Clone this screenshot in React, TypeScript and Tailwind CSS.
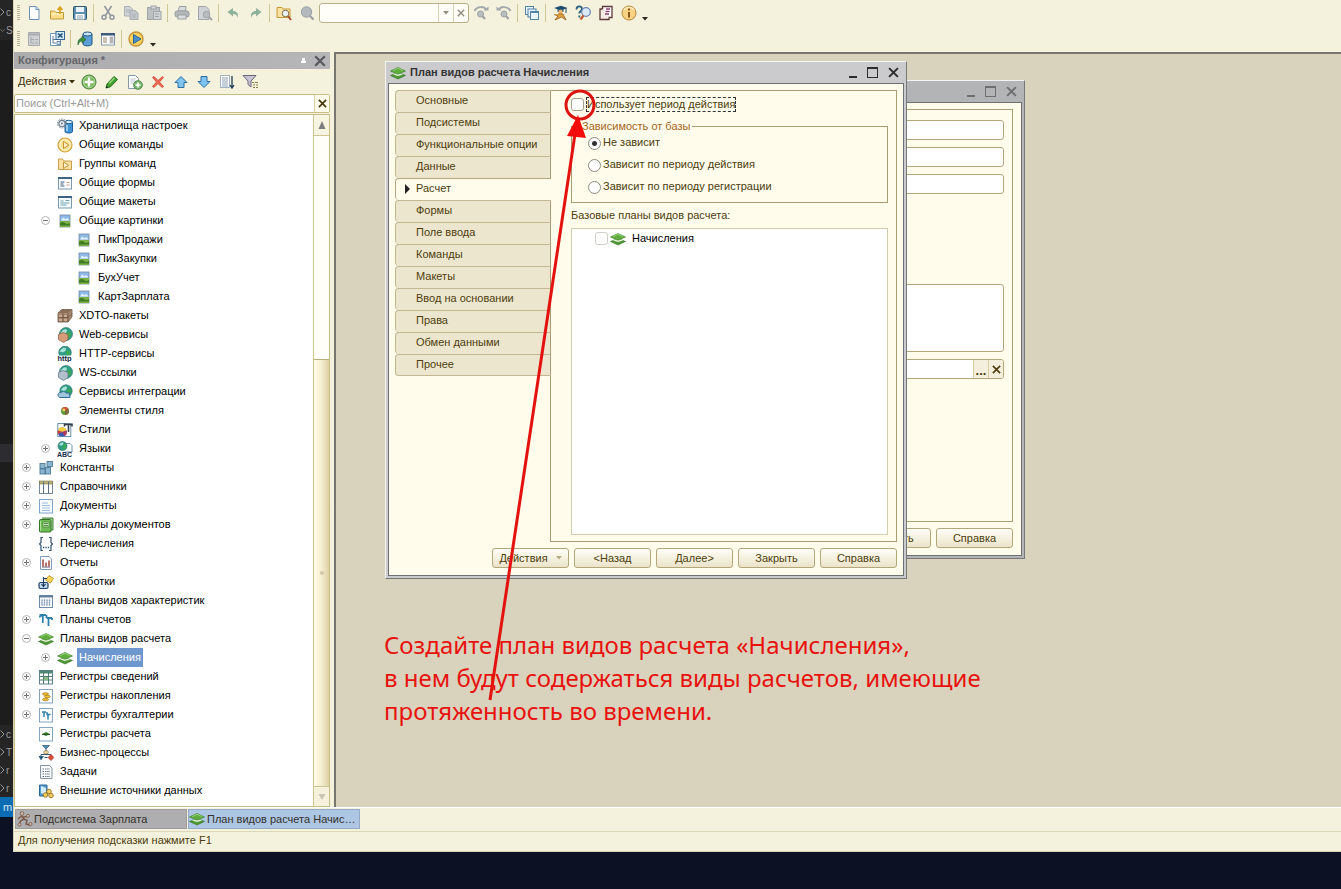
import React from "react";

type IconName = string;

function Layers() {
  return (
    <g>
      <path d="M0.5 10.5 L8 7.5 L15.5 10.5 L8 14 Z" fill="#4f9a35" stroke="#2f6f22" strokeWidth=".6" />
      <path d="M3 9.5 L8 7.6 L13 9.5 L8 11 Z" fill="#e4efd8" />
      <path d="M0.5 6 L8 2.5 L15.5 6 L8 9.2 Z" fill="#5fae3d" stroke="#357d26" strokeWidth=".6" />
      <path d="M3 5.6 L8 3.3 L13 5.6" fill="none" stroke="#93cf74" strokeWidth="1" />
    </g>
  );
}

function Globe({ x = 9, y = 7, r = 6 }: { x?: number; y?: number; r?: number }) {
  return (
    <g>
      <circle cx={x} cy={y} r={r} fill="#2f9d86" stroke="#23675f" strokeWidth=".6" />
      <path d={`M${x - r + 1} ${y - 1} q${r / 2} ${-r / 1.2} ${r} ${-r / 2} q0 ${r / 2} ${-r / 2} ${r / 1.5} z`} fill="#a8e0d8" />
      <path d={`M${x + 1} ${y - 2} q3 0 ${r - 2} 2 q-1 3 -3 4 z`} fill="#3dab4b" />
    </g>
  );
}

function Picture() {
  return (
    <g>
      <rect x="3" y="2" width="10" height="12" fill="#8db9e6" stroke="#7288a3" strokeWidth=".8" />
      <path d="M4 7.5 L6 4.5 L8.500 6 L10.5 5 L12.5 7.5 Z" fill="#e3f0fa" />
      <rect x="3" y="8" width="10" height="6" fill="#7bb043" />
      <path d="M3 10 q3 -2 5 0 t5 0 v2.500 h-10 z" fill="#3f7a24" />
    </g>
  );
}

function Account() {
  return (
    <path d="M1.5 3 H8 M4.8 3 V11 M8.5 6 H14 M10.5 6 V14 M4.8 3 q-3 0 -3 2.500 M8.5 3 v3 M14 6 v2" fill="none" stroke="#2f81ad" strokeWidth="1.8" />
  );
}

const sheet = <path d="M3.5 1.5 H10 L13 4.5 V14.5 H3.5 Z" fill="#fdfeff" stroke="#6e8fb5" />;

const icons: Record<IconName, React.ReactNode> = {
  new: (
    <g>
      {sheet}
      <path d="M10 1.5 V4.5 H13" fill="#cfe0f2" stroke="#6e8fb5" />
    </g>
  ),
  open: (
    <g>
      <path d="M1.500 14 V6 H5.500 L7 7.500 H14.500 V14 Z" fill="#fbdc8a" stroke="#c39a3a" />
      <path d="M2.500 9 H13.500" stroke="#fff0bf" strokeWidth="1.500" />
      <path d="M11 9 V3 M8.600 5 L11 2 L13.400 5" fill="none" stroke="#d9a31c" strokeWidth="1.700" />
    </g>
  ),
  save: (
    <g>
      <rect x="1.5" y="1.5" width="13" height="13" rx="1" fill="#5b8fae" stroke="#2f566f" />
      <rect x="4" y="2" width="8" height="5" fill="#e9f3f8" />
      <rect x="3.5" y="9" width="9" height="5.5" fill="#fff" />
      <path d="M5 11 h6 M5 13 h6" stroke="#6a8b9c" strokeWidth=".8" />
    </g>
  ),
  cut: (
    <g fill="none" stroke="#8f979d" strokeWidth="1.5">
      <path d="M4.5 1 L10.5 10.5 M11.5 1 L5.5 10.5" />
      <circle cx="4" cy="12.3" r="2" />
      <circle cx="12" cy="12.3" r="2" />
    </g>
  ),
  copy: (
    <g fill="#d2d6d8" stroke="#a9afb3">
      <path d="M1.500 1.500 H7 L9.500 4 V11 H1.500 Z" />
      <path d="M7 5.500 H12 L15 8 V14.500 H7 Z" fill="#c0c6ca" />
      <path d="M3 5 h4 M3 7 h4 M9 10 h4 M9 12 h4" />
    </g>
  ),
  paste: (
    <g stroke="#a0a5a8">
      <rect x="1.500" y="2.500" width="12" height="12" fill="#bdbfc0" />
      <rect x="5" y="1" width="5" height="3" fill="#d8dadb" />
      <rect x="7.500" y="6.500" width="7.500" height="8" fill="#d0d3d5" />
      <path d="M9 9 h4 M9 11.500 h4" />
    </g>
  ),
  print: (
    <g stroke="#9a9fa2">
      <path d="M4 6 L5.500 1.500 H12 L11.500 6 Z" fill="#d9dcdd" />
      <rect x="1" y="6" width="14" height="6" rx="2" fill="#b3b7b9" />
      <rect x="4" y="10" width="8" height="4" fill="#dcdfe0" />
    </g>
  ),
  preview: (
    <g stroke="#a0a5a9">
      <path d="M1.500 1.500 H9 L12 4.500 V14.500 H1.500 Z" fill="#cfd2d4" />
      <circle cx="9.500" cy="9.500" r="3.300" fill="#b5bbbf" />
      <path d="M12 12 L15 15" strokeWidth="2" />
    </g>
  ),
  undo: <path d="M2.500 7 L8 3 V6 C12 6 13.500 9 13 13 C12 10 11 9 8 9 V11.500 Z" fill="#8fb09a" />,
  redo: <path d="M13.500 7 L8 3 V6 C4 6 2.500 9 3 13 C4 10 5 9 8 9 V11.500 Z" fill="#8fb09a" />,
  findfolder: (
    <g>
      <path d="M1 12.500 V2.500 H6 L7 4 H14 V12.500 Z" fill="#fbe3a1" stroke="#c99a34" />
      <circle cx="9.500" cy="8.500" r="3.300" fill="#e9f2f8" stroke="#7c6a4d" />
      <path d="M12 11 L15 15" stroke="#a8512f" strokeWidth="2" />
    </g>
  ),
  zoom: (
    <g>
      <circle cx="7.500" cy="7" r="5.200" fill="#b3b9be" stroke="#989fa5" />
      <path d="M11 11 L14.500 14.500" stroke="#989fa5" strokeWidth="2.200" />
    </g>
  ),
  findprev: (
    <g>
      <path d="M1.500 6 C4 1 11 1 13.500 5" fill="none" stroke="#a3a8ab" strokeWidth="2" />
      <path d="M10.500 5.500 H15.500 V1.500 Z" fill="#a3a8ab" />
      <circle cx="7.500" cy="9" r="3" fill="#b9bec1" stroke="#9ba0a4" />
      <path d="M9.500 11 L12 14" stroke="#9ba0a4" strokeWidth="2" />
    </g>
  ),
  findnext: (
    <g>
      <path d="M14.500 6 C12 1 5 1 2.500 5" fill="none" stroke="#a3a8ab" strokeWidth="2" />
      <path d="M5.500 5.500 H0.500 V1.500 Z" fill="#a3a8ab" />
      <circle cx="8" cy="9" r="3" fill="#b9bec1" stroke="#9ba0a4" />
      <path d="M10 11 L12.500 14" stroke="#9ba0a4" strokeWidth="2" />
    </g>
  ),
  windows: (
    <g fill="#e9f4fc" stroke="#5284a8">
      <rect x="1.500" y="1.500" width="8" height="8" />
      <rect x="4" y="4" width="8" height="8" />
      <rect x="6.500" y="6.500" width="8" height="8" />
      <path d="M7 7.500 h7" />
    </g>
  ),
  graduate: (
    <g>
      <path d="M2 3 L9 0.800 L15.500 3 L9 5.500 Z" fill="#1f4c6b" />
      <path d="M5.500 4 V7 H11.500 V4" fill="#2b5f81" />
      <circle cx="8.500" cy="7" r="2.200" fill="#f0b56b" />
      <path d="M6 9 L11 9 L14 15 L9.500 12 L3 15 L6 11 L2 9.500" fill="#e3a23c" stroke="#8f5d1f" strokeWidth=".8" />
      <path d="M14 3 V8" stroke="#1f4c6b" />
    </g>
  ),
  helpfind: (
    <g>
      <path d="M1.500 4.500 C1.500 0.500 7 0.500 7 4 C7 6 4.300 6 4.300 8.500 M4.300 10.500 V12.500" fill="none" stroke="#27607d" strokeWidth="1.800" />
      <circle cx="11" cy="7" r="4.300" fill="#dbe9f8" stroke="#6c84b5" strokeWidth="1.200" />
      <path d="M8.500 10.500 L5.500 14.500" stroke="#c45b2c" strokeWidth="2.200" />
    </g>
  ),
  book: (
    <g>
      <path d="M4.500 1.500 H14 V12.500 H4.500 Z" fill="#fff" stroke="#5e3b3a" strokeWidth="1.300" />
      <path d="M4.500 4 H2 V14.500 H11 V12.500" fill="#f4ece3" stroke="#5e3b3a" strokeWidth="1.300" />
      <path d="M8 4 h4 M7.500 6.500 h4 M7 9 h4" stroke="#8b4470" strokeWidth="1.300" />
    </g>
  ),
  info: (
    <g>
      <circle cx="8" cy="8" r="7" fill="#fbd183" stroke="#b98437" />
      <path d="M3 5 C5 1.500 11 1.500 13 5" fill="none" stroke="#fff0c0" strokeWidth="1.500" />
      <path d="M8 3.500 V5.500 M8 7 V12.500" stroke="#8a561a" strokeWidth="2" />
    </g>
  ),
  treegray: (
    <g stroke="#a7abae">
      <path d="M2.500 1.500 H13.500 V14.500 H2.500 Z" fill="#ced0d2" />
      <path d="M3 3.500 H13" strokeWidth="2" />
      <path d="M5 6 v6 h3 M5 8.500 h3 M9 8.500 h3 M9 12 h3" fill="none" />
    </g>
  ),
  treeclose: (
    <g>
      <path d="M1.500 2.500 H11.500 V14.500 H1.500 Z" fill="#fff" stroke="#6d96b9" />
      <path d="M4 5 V12 H7 M4 8.500 H7" fill="none" stroke="#5a7c97" />
      <rect x="8" y="10.500" width="3" height="3" fill="#d2e6f5" stroke="#5a7c97" strokeWidth=".8" />
      <rect x="7" y="0.500" width="8.500" height="8" fill="#d7edfb" stroke="#336791" />
      <path d="M9 2.500 L13.500 6.500 M13.500 2.500 L9 6.500" stroke="#1c4f78" strokeWidth="1.600" />
    </g>
  ),
  dbload: (
    <g>
      <path d="M6 3 V13 C6 15.500 15 15.500 15 13 V3" fill="#5b9fd6" stroke="#21557f" />
      <ellipse cx="10.500" cy="3" rx="4.500" ry="2" fill="#c6e3f7" stroke="#21557f" />
      <path d="M1 14 C0.500 9 3 7 5 7 V5 L9 8.500 L5 12 V10 C3 10 2 11 1 14" fill="#3d9140" stroke="#1d5c27" strokeWidth=".6" />
    </g>
  ),
  columns: (
    <g>
      <rect x="1.500" y="2.500" width="13" height="11.500" fill="#fff" stroke="#8296a8" />
      <rect x="1" y="2" width="14" height="2.500" fill="#3b5a7c" />
      <rect x="9" y="5" width="5" height="8.500" fill="#d9e2ea" />
      <path d="M3 7 h4 M3 9 h4 M3 11 h4 M10 7 h3 M10 9 h3 M10 11 h3" stroke="#9a8570" />
    </g>
  ),
  play: (
    <g>
      <circle cx="8" cy="8" r="7" fill="#fbd35e" stroke="#c6913a" strokeWidth="1.400" />
      <path d="M5.500 3.500 L13 8 L5.500 12.500 Z" fill="#4b8fc6" stroke="#2b6596" />
    </g>
  ),
  add: (
    <g>
      <circle cx="8" cy="8" r="7" fill="#79b95c" stroke="#4a7f3b" />
      <circle cx="8" cy="8" r="5.700" fill="none" stroke="#b9deab" strokeWidth=".8" />
      <path d="M8 3.500 V12.500 M3.500 8 H12.500" stroke="#fff" strokeWidth="2.400" />
    </g>
  ),
  pencil: (
    <g>
      <path d="M3 10 L10 2.500 L13.500 5.500 L6.500 12.800 L2 14 Z" fill="#43a12f" stroke="#266b1d" />
      <path d="M5 9.500 L10.500 4" stroke="#97da7e" strokeWidth="1.400" />
      <path d="M2 14 L2.500 11.800 L4.300 13.400 Z" fill="#222" />
    </g>
  ),
  addcopy: (
    <g>
      <path d="M1.500 1.500 H8.500 L11.500 4.500 V14.500 H1.500 Z" fill="#fff" stroke="#8399a8" />
      <path d="M3.500 5 h5 M3.500 7 h5 M3.500 9 h3" stroke="#b6c4cd" />
      <circle cx="11" cy="11" r="4.300" fill="#7fb870" stroke="#4e8348" />
      <path d="M11 8.500 V13.500 M8.500 11 H13.500" stroke="#fff" strokeWidth="1.600" />
    </g>
  ),
  remove: <path d="M2.500 3.500 L4 2.500 L8 6.500 L12.500 2.500 L13.500 3.500 L9.500 8 L13.500 12.500 L12 13.500 L8 9.500 L4 13.500 L2.500 12.500 L6.500 8 Z" fill="#ee6a55" stroke="#d0402f" strokeWidth=".8" />,
  up: <path d="M8 2.500 L14 8.500 H11 V13.500 H5 V8.500 H2 Z" fill="#7fc3f2" stroke="#2c6da0" />,
  down: <path d="M8 13.500 L14 7.500 H11 V2.500 H5 V7.500 H2 Z" fill="#7fc3f2" stroke="#2c6da0" />,
  sort: (
    <g>
      <rect x="1.500" y="1.500" width="9" height="12" fill="#fff" stroke="#a3b2bf" />
      <path d="M3 4 h6 M3 6 h6 M3 8 h6 M3 10 h6 M3 12 h6" stroke="#8fa1b1" />
      <path d="M13 2 V13 M11 11 L13 14 L15 11" fill="none" stroke="#1f3d58" strokeWidth="1.300" />
    </g>
  ),
  filter: (
    <g>
      <path d="M1 1.500 H14 L9 7 V13 L6 10.500 V7 Z" fill="#c9c4d3" stroke="#6d677c" />
      <path d="M10 8.500 h2 M11 11 h2 M11 13.500 h2 M13 8.500 h3 M14 11 h2 M14 13.500 h2" stroke="#8c7a4c" strokeWidth="1.100" />
    </g>
  ),
  storage: (
    <g>
      <path d="M8 4 V13.500 C8 15.500 15.500 15.500 15.500 13.500 V4" fill="#3f94d8" stroke="#225f94" />
      <ellipse cx="11.700" cy="4" rx="3.800" ry="1.700" fill="#d6ecfa" stroke="#225f94" />
      <path d="M10 7 V13" stroke="#b4dcf7" strokeWidth="1.500" />
      <circle cx="5" cy="5.500" r="3.200" fill="#e6ebef" stroke="#6f7f8d" strokeWidth="1.300" />
      <circle cx="5" cy="5.500" r="4.500" fill="none" stroke="#6f7f8d" strokeWidth="1" strokeDasharray="1.500 1.300" />
      <circle cx="5" cy="5.500" r="1" fill="#6f7f8d" />
    </g>
  ),
  command: (
    <g>
      <circle cx="8" cy="8" r="7" fill="#fdeaa6" stroke="#d3a13c" strokeWidth="1.200" />
      <circle cx="8" cy="8" r="5" fill="#fbdf8d" stroke="#fff3cd" />
      <path d="M6.500 4.500 L12 8 L6.500 11.500 Z" fill="#fff1c2" stroke="#c08a26" strokeWidth=".9" />
    </g>
  ),
  group: (
    <g>
      <path d="M1.500 13.500 V3 H5.500 L7 5 H14.500 V13.500 Z" fill="#fbe2a2" stroke="#c99f4b" />
      <path d="M6.500 6 L11.500 9.300 L6.500 12.500 Z" fill="#fff3cc" stroke="#bd8a2c" strokeWidth=".9" />
    </g>
  ),
  form: (
    <g>
      <rect x="1.500" y="2.500" width="13" height="11.500" fill="#fbfdff" stroke="#7d98ae" />
      <path d="M1 3 h14" stroke="#3f6281" strokeWidth="2" />
      <path d="M3.500 7 h4 M3.500 9 h3 M3.500 11 h4" stroke="#3b5e86" />
      <path d="M9.500 7.500 h3 M9.500 10 h3" stroke="#c0a68e" />
    </g>
  ),
  layout: (
    <g>
      <rect x="1.500" y="2.500" width="13" height="11.500" fill="#f3fafd" stroke="#7d98ae" />
      <path d="M1 3 h14" stroke="#3f6281" strokeWidth="2" />
      <path d="M3.500 7 h3 M3.500 9 h9 M3.500 11 h6 M8.500 6.500 h4" stroke="#71a2b9" />
    </g>
  ),
  picture: <Picture />,
  package: (
    <g>
      <path d="M1 5 L5 1.500 H15 L15 9 L11 14 H1 Z" fill="#a98a70" stroke="#6d5340" strokeWidth=".8" />
      <path d="M1 5 L5 1.500 H15 L11 5 Z" fill="#8a705b" />
      <path d="M11 5 V14 M6 5 V14 M1 9.500 H11 M11 9.500 L15 5.500" stroke="#6a513f" strokeWidth=".8" />
      <path d="M2 8 h3 M7 8 h3 M2 12 h3 M7 12 h3" stroke="#e3cfb9" />
    </g>
  ),
  web: (
    <g>
      <Globe x={9} y={7} r={6.500} />
      <path d="M1.500 7.500 L6 5.500 L11 7.500 V12.500 L6.500 15.500 L1.500 12.500 Z" fill="#d69c7a" stroke="#94604a" strokeWidth=".8" />
    </g>
  ),
  http: (
    <g>
      <Globe x={8} y={6.500} r={6.300} />
      <rect x="0" y="9.500" width="16" height="6.500" fill="#fff" opacity=".85" />
      <text x="0.500" y="15" fontFamily="Liberation Sans" fontWeight="700" fontSize="7.500" fill="#12233a">http</text>
    </g>
  ),
  wslink: (
    <g>
      <Globe x={9} y={7} r={6.500} />
      <path d="M1.500 7.500 L6 5.500 L11 7.500 V12.500 L6.500 15.500 L1.500 12.500 Z" fill="#b3bfcd" stroke="#667a91" strokeWidth=".8" />
    </g>
  ),
  integration: (
    <g>
      <Globe x={9} y={7} r={6.200} />
      <path d="M2.500 13.500 C-0.500 11 1.500 8 4 8.500 C6 6.500 8.500 8 9 9 H12.500 L13 13.500 Z" fill="#9fc5dd" stroke="#2f6c8f" />
    </g>
  ),
  styleitem: (
    <g>
      <circle cx="8" cy="8" r="4" fill="#5b9b3b" />
      <path d="M8 8 L4.500 6 A4 4 0 0 1 11.500 6 Z" fill="#d94b3c" />
      <path d="M8 8 L11.500 6 A4 4 0 0 1 8 12 Z" fill="#7c6a3e" />
      <circle cx="6.800" cy="7" r="1.400" fill="#f6d65b" />
    </g>
  ),
  style: (
    <g>
      <rect x="0.800" y="1.500" width="13" height="13" fill="#fff" stroke="#6d90ad" />
      <path d="M7.500 2.500 H15 M11.500 2.500 V10 M7.500 1.500 v3 M15 1.500 v3" stroke="#333e4a" strokeWidth="1.600" />
      <circle cx="5.200" cy="10" r="4.600" fill="#3b57b3" />
      <path d="M5.200 10 L0.800 8.500 A4.600 4.600 0 0 1 9.600 8.500 Z" fill="#f3cf3f" />
      <path d="M5.200 10 L1 12 A4.600 4.600 0 0 1 0.800 8.500 Z" fill="#d93e35" />
      <path d="M5.200 10 L9.500 8.500 A4.600 4.600 0 0 1 7.500 14 Z" fill="#b33a5a" />
    </g>
  ),
  language: (
    <g>
      <path d="M8 2.500 H13 L15 4.500 V11 H8" fill="#fff" stroke="#6d90ad" />
      <Globe x={5.500} y={5} r={4.500} />
      <text x="0" y="16" fontFamily="Liberation Sans" fontWeight="700" fontSize="7" fill="#17304d">ABC</text>
    </g>
  ),
  constant: (
    <g fill="#8ab4cf" stroke="#4d7a97" strokeWidth=".9">
      <rect x="2" y="3.500" width="5" height="5" />
      <rect x="9" y="1.500" width="5.500" height="5" />
      <rect x="2" y="9" width="5" height="5" />
      <rect x="7.500" y="7.500" width="5" height="6.500" />
    </g>
  ),
  catalog: (
    <g>
      <rect x="1.500" y="2.500" width="13" height="12" fill="#fff" stroke="#74899b" />
      <rect x="1.500" y="2" width="13" height="3" fill="#bcb277" stroke="#7b7747" strokeWidth=".6" />
      <path d="M5.500 2.500 V14.500 M10.500 2.500 V14.500" stroke="#5b7183" />
    </g>
  ),
  document: (
    <g>
      <rect x="1.500" y="1.500" width="13" height="13.500" fill="#f8fcff" stroke="#7fa3c8" />
      <path d="M4 5 h6 M4 7.500 h8 M4 10 h8 M4 12.500 h8" stroke="#9bbbd9" />
    </g>
  ),
  journal: (
    <g>
      <path d="M4 1 H15 V13 H13" fill="#a9d69a" stroke="#3f7d35" />
      <rect x="1.500" y="2.500" width="11.500" height="12.500" rx="1" fill="#6fbd55" stroke="#34702a" />
      <rect x="5" y="5" width="6" height="5" fill="#c9e9b8" stroke="#34702a" strokeWidth=".6" />
      <path d="M6 6.500 h4 M6 8.500 h4" stroke="#34702a" strokeWidth=".8" />
      <path d="M2.500 4 V14" stroke="#b1e09c" />
    </g>
  ),
  enumeration: (
    <g fill="none" stroke="#31556f" strokeWidth="1.200">
      <path d="M5 1.500 H3 V6.500 L1.500 8 L3 9.500 V14.500 H5 M11 1.500 H13 V6.500 L14.500 8 L13 9.500 V14.500 H11" />
      <path d="M5 11.500 h1.300 M7.400 11.500 h1.300 M9.800 11.500 h1.300" strokeWidth="1.600" />
    </g>
  ),
  report: (
    <g>
      <path d="M2.500 1.500 H11 L13.500 4 V14.500 H2.500 Z" fill="#fdfdff" stroke="#7f9bb8" />
      <path d="M5 4.500 V11.500 M8 7.500 V11.500 M11 5.500 V11.500" stroke="#a8433b" strokeWidth="1.500" />
      <path d="M4 12 h8" stroke="#655f77" />
    </g>
  ),
  processing: (
    <g>
      <path d="M11 1.500 L15.500 4.500 L12.500 9 L7.500 6 Z" fill="#fbd65c" stroke="#bb932d" strokeWidth=".9" />
      <rect x="1" y="8.500" width="9" height="6" rx="1.500" fill="#c0d8ee" stroke="#1e3e63" strokeWidth="1.200" />
      <path d="M5.500 3 V12 M3.500 10 L5.500 12.500 L7.500 10 M5.500 4.500 H9" fill="none" stroke="#1e3e63" strokeWidth="1.200" />
    </g>
  ),
  characteristic: (
    <g>
      <rect x="1.500" y="2.500" width="13" height="12" fill="#fff" stroke="#6f8da9" />
      <path d="M1 3.500 h14" stroke="#5d7e9d" strokeWidth="2" />
      <path d="M4 6.500 V13 M6.500 6.500 V13 M9 6.500 V13 M11.500 6.500 V13" stroke="#54789a" strokeWidth="1.400" strokeDasharray="1.200 .8" />
    </g>
  ),
  account: <Account />,
  calc: <Layers />,
  inforeg: (
    <g>
      <rect x="1.500" y="1.500" width="13" height="13.500" fill="#fff" stroke="#618294" />
      <path d="M1.500 3 h13" stroke="#4f8774" strokeWidth="3" />
      <path d="M1.500 7.500 h13 M1.500 11 h13 M5.500 2 V15 M10.500 2 V15" stroke="#4f7c70" />
      <rect x="6" y="8" width="4" height="3" fill="#8dbb88" />
    </g>
  ),
  accumreg: (
    <g>
      <rect x="1.500" y="1.500" width="13" height="13.500" fill="#fbfdff" stroke="#86a4bd" />
      <g fill="#f2bd2e" stroke="#a2761a" strokeWidth=".7">
        <ellipse cx="7.500" cy="11.500" rx="3" ry="1.300" />
        <ellipse cx="9.300" cy="8.500" rx="3" ry="1.300" />
        <ellipse cx="7.500" cy="6" rx="3" ry="1.300" />
      </g>
    </g>
  ),
  accountreg: (
    <g>
      <rect x="1.500" y="1.500" width="13" height="13.500" fill="#fbfdff" stroke="#86a4bd" />
      <path d="M4 5 H8 M6 5 V10 M8.500 7.500 H12.500 M10 7.500 V12.500 M9 5 V7.500" stroke="#2f81ad" strokeWidth="1.500" />
    </g>
  ),
  calcreg: (
    <g>
      <rect x="1.500" y="1.500" width="13" height="13.500" fill="#fbfdff" stroke="#86a4bd" />
      <path d="M4 8 L8 6 L12 8 L8 10 Z" fill="#35782c" />
      <path d="M4 8.500 h8" stroke="#25591f" />
    </g>
  ),
  process: (
    <g>
      <path d="M8 4 V8 M3 12 L3 9.500 H13 V12" fill="none" stroke="#2d5574" />
      <path d="M4.500 0.500 H11.500 L8 4 Z" fill="#4d8fb8" stroke="#2d5574" strokeWidth=".7" />
      <rect x="5.800" y="5.800" width="4.400" height="3" rx="1" fill="#f2dca6" stroke="#8d7746" strokeWidth=".7" />
      <path d="M0.500 11 H6 L3 15.500 Z" fill="#2f5d7e" />
      <path d="M13 9.500 L16 12.500 L13 15.500 L10 12.500 Z" fill="#dc4d3a" stroke="#9a2c20" strokeWidth=".6" />
      <path d="M6.500 12.500 h3" stroke="#2d5574" />
    </g>
  ),
  task: (
    <g>
      <path d="M2.500 1.500 H11.500 L14 4 V14.500 H2.500 Z" fill="#fcfdff" stroke="#8393a3" />
      <path d="M4.500 5 h1.500 M4.500 7.500 h1.500 M4.500 10 h1.500 M4.500 12.500 h1.500 M7 5 h5 M7 7.500 h5 M7 10 h5 M7 12.500 h5" stroke="#5f7386" strokeWidth="1" strokeDasharray="1.500 .7" />
    </g>
  ),
  external: (
    <g>
      <path d="M1.500 2 H9 V13 H1.500 Z" fill="#559dd1" stroke="#2a668f" />
      <path d="M3 3 L8 5 V12 L3 10 Z" fill="#d4ebfa" />
      <g fill="#f7cc5a" stroke="#8d6a21" strokeWidth=".8">
        <circle cx="7.500" cy="12" r="2.300" />
        <circle cx="13" cy="12.500" r="2.300" />
        <circle cx="11" cy="8.500" r="2.300" />
      </g>
    </g>
  ),
  subsystem: (
    <g fill="#d3c0b0" stroke="#7a5c4c" strokeWidth=".9">
      <circle cx="5" cy="2.500" r="1.800" />
      <path d="M4 4.500 L7 8 L3.500 10 L2 14 M7 8 L10 9.500 L9 13 L14 14.500 M4.500 5 L1 8 M6 6 L10 5.500" fill="none" strokeWidth="1.500" />
      <circle cx="11" cy="4.800" r="1.500" />
      <circle cx="2.500" cy="13.500" r="1.500" />
      <circle cx="13.500" cy="13" r="1.500" />
    </g>
  ),
};

function Icon({ name }: { name: IconName }) {
  return (
    <svg viewBox="0 0 16 16" className="size-4 shrink-0" aria-hidden="true">
      {icons[name]}
    </svg>
  );
}

function Grip() {
  return (
    <svg viewBox="0 0 3 16" className="h-4 w-[3px] shrink-0" aria-hidden="true">
      <path d="M1.500 0 V16" stroke="#b9b192" strokeWidth="3" strokeDasharray="1 1" />
    </svg>
  );
}

function Sep() {
  return (
    <div className="flex w-[5px] shrink-0 justify-center">
      <div className="h-[18px] w-px bg-[#cfc595]" />
    </div>
  );
}

function Tool({ name, label }: { name: IconName; label: string }) {
  return (
    <button type="button" aria-label={label} className="flex h-[22px] w-[23px] shrink-0 items-center justify-center">
      <Icon name={name} />
    </button>
  );
}

function Arrow({ className = "" }: { className?: string }) {
  return (
    <svg viewBox="0 0 6 4" className={"h-1 w-1.5 shrink-0 " + className} aria-hidden="true">
      <path d="M0 0 H6 L3 3.500 Z" fill="currentColor" />
    </svg>
  );
}

function Cross({ className = "" }: { className?: string }) {
  return (
    <svg viewBox="0 0 10 10" className={className} aria-hidden="true">
      <path d="M1 1 L9 9 M9 1 L1 9" stroke="currentColor" strokeWidth="1.800" fill="none" />
    </svg>
  );
}

function Toolbars() {
  return (
    <div className="shrink-0 bg-[#f4f1dd]">
      <div className="flex h-[26px] items-center pl-[3px]">
        <Grip />
        <div className="w-0.5 shrink-0" />
        <Tool name="new" label="Новый" />
        <Tool name="open" label="Открыть" />
        <Tool name="save" label="Сохранить" />
        <Sep />
        <Tool name="cut" label="Вырезать" />
        <Tool name="copy" label="Копировать" />
        <Tool name="paste" label="Вставить" />
        <Sep />
        <Tool name="print" label="Печать" />
        <Tool name="preview" label="Просмотр" />
        <Sep />
        <Tool name="undo" label="Отменить" />
        <Tool name="redo" label="Повторить" />
        <Sep />
        <Tool name="findfolder" label="Глобальный поиск" />
        <Tool name="zoom" label="Найти" />
        <div className="ml-px flex h-5 w-[150px] shrink-0 overflow-hidden rounded-[3px] border border-[#b9b08a] bg-[#fffef8]">
          <input aria-label="Строка поиска" className="min-w-0 flex-1 bg-transparent px-1 outline-none" />
          <button type="button" aria-label="Список" className="flex w-[15px] items-center justify-center border-l border-[#d8d1b4] text-[#8f8c80]">
            <Arrow />
          </button>
          <button type="button" aria-label="Очистить" className="flex w-[15px] items-center justify-center border-l border-[#d8d1b4] text-[#8f8c80]">
            <Cross className="size-2" />
          </button>
        </div>
        <Tool name="findprev" label="Найти предыдущий" />
        <Tool name="findnext" label="Найти следующий" />
        <Sep />
        <Tool name="windows" label="Окна" />
        <Sep />
        <Tool name="graduate" label="Синтакс-помощник" />
        <Tool name="helpfind" label="Поиск в справке" />
        <Tool name="book" label="Справка" />
        <Tool name="info" label="О программе" />
        <Arrow className="mt-3 ml-0.5 text-[#2a2a20]" />
      </div>
      <div className="flex h-[26px] items-center pl-[3px]">
        <Grip />
        <div className="w-0.5 shrink-0" />
        <Tool name="treegray" label="Открыть конфигурацию" />
        <Tool name="treeclose" label="Закрыть конфигурацию" />
        <Sep />
        <Tool name="dbload" label="Обновить базу данных" />
        <Tool name="columns" label="Окно конфигурации" />
        <Sep />
        <Tool name="play" label="Начать отладку" />
        <Arrow className="mt-3 ml-[3px] text-[#2a2a20]" />
      </div>
    </div>
  );
}

type Node = { t: string; i: IconName; l: 1 | 2 | 3; e?: "+" | "-"; sel?: boolean };

const nodes: Node[] = [
  { t: "Хранилища настроек", i: "storage", l: 2 },
  { t: "Общие команды", i: "command", l: 2 },
  { t: "Группы команд", i: "group", l: 2 },
  { t: "Общие формы", i: "form", l: 2 },
  { t: "Общие макеты", i: "layout", l: 2 },
  { t: "Общие картинки", i: "picture", l: 2, e: "-" },
  { t: "ПикПродажи", i: "picture", l: 3 },
  { t: "ПикЗакупки", i: "picture", l: 3 },
  { t: "БухУчет", i: "picture", l: 3 },
  { t: "КартЗарплата", i: "picture", l: 3 },
  { t: "XDTO-пакеты", i: "package", l: 2 },
  { t: "Web-сервисы", i: "web", l: 2 },
  { t: "HTTP-сервисы", i: "http", l: 2 },
  { t: "WS-ссылки", i: "wslink", l: 2 },
  { t: "Сервисы интеграции", i: "integration", l: 2 },
  { t: "Элементы стиля", i: "styleitem", l: 2 },
  { t: "Стили", i: "style", l: 2 },
  { t: "Языки", i: "language", l: 2, e: "+" },
  { t: "Константы", i: "constant", l: 1, e: "+" },
  { t: "Справочники", i: "catalog", l: 1, e: "+" },
  { t: "Документы", i: "document", l: 1, e: "+" },
  { t: "Журналы документов", i: "journal", l: 1, e: "+" },
  { t: "Перечисления", i: "enumeration", l: 1 },
  { t: "Отчеты", i: "report", l: 1, e: "+" },
  { t: "Обработки", i: "processing", l: 1 },
  { t: "Планы видов характеристик", i: "characteristic", l: 1 },
  { t: "Планы счетов", i: "account", l: 1, e: "+" },
  { t: "Планы видов расчета", i: "calc", l: 1, e: "-" },
  { t: "Начисления", i: "calc", l: 2, e: "+", sel: true },
  { t: "Регистры сведений", i: "inforeg", l: 1, e: "+" },
  { t: "Регистры накопления", i: "accumreg", l: 1, e: "+" },
  { t: "Регистры бухгалтерии", i: "accountreg", l: 1, e: "+" },
  { t: "Регистры расчета", i: "calcreg", l: 1 },
  { t: "Бизнес-процессы", i: "process", l: 1 },
  { t: "Задачи", i: "task", l: 1 },
  { t: "Внешние источники данных", i: "external", l: 1 },
];

const indent = { 1: "pl-1.5", 2: "pl-[25px]", 3: "pl-11" };

function TreeRow({ n }: { n: Node }) {
  return (
    <li role="treeitem" aria-selected={!!n.sel} className={"flex h-[19px] items-center whitespace-nowrap " + indent[n.l]}>
      <span className="flex w-[17px] shrink-0 items-center pl-px">
        {n.e && (
          <svg viewBox="0 0 9 9" className="size-[9px]" aria-hidden="true">
            <circle cx="4.500" cy="4.500" r="4" fill="#fff" stroke="#b5b5b5" />
            <path d={n.e === "+" ? "M2 4.500 H7 M4.500 2 V7" : "M2 4.500 H7"} stroke="#777" fill="none" />
          </svg>
        )}
      </span>
      <Icon name={n.i} />
      <span className={"ml-1 flex h-[19px] items-center px-0.5 " + (n.sel ? "bg-[#6f97cf] text-white" : "")}>{n.t}</span>
    </li>
  );
}

function Sidebar() {
  return (
    <aside className="flex w-[316px] shrink-0 flex-col">
      <div className="flex h-[17px] shrink-0 items-center bg-linear-to-r from-[#acacae] to-[#b6b6b8] pr-1 pl-1 font-bold text-[#66666a]">
        <span className="flex-1">Конфигурация *</span>
        <svg viewBox="0 0 5 6" className="mr-2 h-1.5 w-[5px]" aria-hidden="true">
          <path d="M1 0 H4 V3 H5 V5 H0 V3 H1 Z" fill="#fff" />
        </svg>
        <button type="button" aria-label="Закрыть панель" className="text-[#58585c]">
          <Cross className="size-3" />
        </button>
      </div>
      <div className="flex h-[25px] shrink-0 items-center pl-1">
        <button type="button" className="mr-0.5 flex items-center gap-[3px] text-[#3b2f0b]">
          Действия
          <Arrow />
        </button>
        <Tool name="add" label="Добавить" />
        <Tool name="pencil" label="Изменить" />
        <Tool name="addcopy" label="Добавить копированием" />
        <Tool name="remove" label="Удалить" />
        <Tool name="up" label="Вверх" />
        <Tool name="down" label="Вниз" />
        <Tool name="sort" label="Порядок" />
        <Tool name="filter" label="Отбор" />
      </div>
      <div className="flex h-[19px] shrink-0 rounded-[2px] border border-[#c9bd86] bg-white">
        <input aria-label="Поиск" placeholder="Поиск (Ctrl+Alt+M)" className="min-w-0 flex-1 px-px outline-none placeholder:text-[#9b9b9b]" />
        <button type="button" aria-label="Очистить поиск" className="flex w-[15px] items-center justify-center border-l border-[#d8cfa6] bg-[#fdfaea] text-[#443507]">
          <Cross className="size-[9px]" />
        </button>
      </div>
      <div className="mt-px flex min-h-0 flex-1 border border-[#c9bd86] bg-white">
        <ul role="tree" aria-label="Конфигурация" className="min-w-0 flex-1 overflow-hidden pt-px">
          {nodes.map((n) => (
            <TreeRow key={n.t + n.l} n={n} />
          ))}
        </ul>
        <div className="flex w-4 shrink-0 flex-col border-l border-[#cfc592] bg-[#fffef8]">
          <div className="flex h-[21px] shrink-0 items-center justify-center border-b border-[#cfc592] bg-[#f8f4e2] text-[#7d7d7d]">
            <svg viewBox="0 0 8 8" className="size-2" aria-hidden="true">
              <path d="M4 0 L7.500 8 H0.500 Z" fill="currentColor" />
            </svg>
          </div>
          <div className="flex-[224]" />
          <div className="flex flex-[427] items-center justify-center border-t border-[#b9ad78] bg-linear-to-r from-[#fffbea] via-[#f4edcf] to-[#ddd0a4]">
            <div className="size-1 rounded-full bg-[#cfc7a8]" />
          </div>
          <div className="flex h-5 shrink-0 items-center justify-center border-t border-[#cfc592] bg-[#f6f1dc] text-[#c9c5b4]">
            <svg viewBox="0 0 8 8" className="size-2" aria-hidden="true">
              <path d="M0.500 1 H7.500 L4 7 Z" fill="currentColor" />
            </svg>
          </div>
        </div>
      </div>
    </aside>
  );
}

function WindowFrame({ title, dim, children }: { title?: string; dim?: boolean; children: React.ReactNode }) {
  return (
    <div
      className={
        "flex size-full flex-col border border-t-[#f4f4f4] border-r-[#75797c] border-b-[#75797c] border-l-[#f4f4f4] pr-0.5 pb-0.5 pl-0.5 " +
        (dim ? "bg-[#b3b4b5]" : "bg-[#cbcbcd]")
      }
    >
      <div className="flex h-[21px] shrink-0 items-center pr-[5px] pl-0.5">
        {title && <Icon name="calc" />}
        <span className="flex-1 pl-1 font-bold text-[#333]">{title}</span>
        <div className={"flex items-center gap-[10px] " + (dim ? "text-[#6f6f6f]" : "text-[#2c2c2c]")}>
          <button type="button" aria-label="Свернуть" className="h-[11px] w-2 border-b-2 border-current" />
          <button type="button" aria-label="Развернуть" className="size-[11px] border border-t-2 border-current" />
          <button type="button" aria-label="Закрыть окно">
            <Cross className="size-[11px]" />
          </button>
        </div>
      </div>
      <div className="flex min-h-0 flex-1 flex-col border border-[#6d7173] bg-[#fffcec] px-1.5 pt-1.5 pb-[7px]">{children}</div>
    </div>
  );
}

function PushButton({ children, menu }: { children: React.ReactNode; menu?: boolean }) {
  return (
    <button
      type="button"
      className="flex h-5 w-[77px] items-center justify-center rounded-[3px] border border-[#b3a67b] bg-linear-to-b from-[#fffef6] to-[#ebe4c9] text-[#4c3d0c]"
    >
      {children}
      {menu && <Arrow className="ml-2 text-[#b5aa84]" />}
    </button>
  );
}

const tabs = [
  "Основные",
  "Подсистемы",
  "Функциональные опции",
  "Данные",
  "Расчет",
  "Формы",
  "Поле ввода",
  "Команды",
  "Макеты",
  "Ввод на основании",
  "Права",
  "Обмен данными",
  "Прочее",
];

const checkStyle = "size-[13px] shrink-0 appearance-none rounded-[3px] border bg-white";

function PlanWindow() {
  return (
    <WindowFrame title="План видов расчета Начисления">
      <div className="flex min-h-0 flex-1">
        <div role="tablist" aria-orientation="vertical" className="flex w-[156px] shrink-0 flex-col text-[#4c3d0c]">
          {tabs.map((t) =>
            t === "Расчет" ? (
              <button
                key={t}
                type="button"
                role="tab"
                aria-selected="true"
                className="flex h-[22px] shrink-0 items-center rounded-l-[4px] border-t border-l border-[#b3a67b] bg-[#fffcec] pb-0.5 pl-[9px]"
              >
                <svg viewBox="0 0 5 10" className="mr-1.5 h-[10px] w-[5px]" aria-hidden="true">
                  <path d="M0 0 L5 5 L0 10 Z" fill="#222" />
                </svg>
                {t}
              </button>
            ) : (
              <button
                key={t}
                type="button"
                role="tab"
                aria-selected="false"
                className="flex h-[22px] shrink-0 items-center rounded-l-[4px] border-t border-l border-[#c3b78f] border-r border-r-[#a99c72] bg-[#ece6cf] pb-0.5 pl-5 nth-last-2:border-b"
              >
                {t}
              </button>
            ),
          )}
          <div className="flex-1 border-r border-[#a99c72]" />
        </div>
        <div role="tabpanel" className="flex min-w-0 flex-1 flex-col border-y border-r border-[#a99c72] pt-1.5 pr-2 pb-1.5 pl-5 text-[#4c3d0c]">
          <div className="flex h-[15px] shrink-0 items-center gap-0.5">
            <input id="period" type="checkbox" className={checkStyle + " border-[#a7a08a]"} />
            <label htmlFor="period" className="border border-dashed border-[#333] leading-[13px] whitespace-nowrap">
              Использует период действия
            </label>
          </div>
          <fieldset className="mt-[7px] h-[84px] shrink-0 border border-[#a99c72] pl-4">
            <legend className="-ml-2 px-0.5 leading-[14px] text-[#a5661c]">Зависимость от базы</legend>
            <div className="-mt-px">
              {["Не зависит", "Зависит по периоду действия", "Зависит по периоду регистрации"].map((t, k) => (
                <label key={t} className="flex h-[22px] items-center gap-0.5 whitespace-nowrap">
                  <input
                    type="radio"
                    name="base"
                    defaultChecked={k === 0}
                    className="size-[13px] shrink-0 appearance-none rounded-full border border-[#8d8a7e] bg-white checked:bg-[radial-gradient(circle,#333_2px,transparent_3px)]"
                  />
                  <span className="pb-0.5">{t}</span>
                </label>
              ))}
            </div>
          </fieldset>
          <div className="mt-[5px] h-[14px] shrink-0 leading-[14px]">Базовые планы видов расчета:</div>
          <div className="mt-1.5 min-h-0 flex-1 border border-[#d3cdb0] bg-white">
            <label className="flex h-[19px] items-center pl-[23px] text-black">
              <input type="checkbox" className={checkStyle + " mr-0.5 border-[#d0cfc8]"} />
              <Icon name="calc" />
              <span className="ml-1.5">Начисления</span>
            </label>
          </div>
        </div>
      </div>
      <div className="mt-1.5 flex shrink-0 justify-end gap-[5px]">
        <PushButton menu>Действия</PushButton>
        <PushButton>&lt;Назад</PushButton>
        <PushButton>Далее&gt;</PushButton>
        <PushButton>Закрыть</PushButton>
        <PushButton>Справка</PushButton>
      </div>
    </WindowFrame>
  );
}

function BackWindow() {
  const field = "w-full shrink-0 rounded-[3px] border border-[#b3a67b] bg-white";
  return (
    <WindowFrame dim>
      <div className="mr-0.5 flex min-h-0 flex-1 flex-col border border-[#a99c72] px-2 pt-[10px]">
        <div className="flex flex-col gap-[7px]">
          <input aria-label="Имя" className={"h-5 " + field} />
          <input aria-label="Синоним" className={"h-5 " + field} />
          <input aria-label="Комментарий" className={"h-5 " + field} />
        </div>
        <textarea aria-label="Пояснение" className={"mt-[90px] h-[68px] resize-none " + field} />
        <div className={"mt-[7px] flex h-5 overflow-hidden " + field}>
          <input aria-label="Картинка" className="min-w-0 flex-1" />
          <button type="button" className="w-[15px] border-l border-[#d8cfa6] bg-[#f4efdc] pt-0.5 text-[13px] font-bold text-[#4c3d0c]">
            ...
          </button>
          <button type="button" aria-label="Очистить" className="flex w-[15px] items-center justify-center border-l border-[#d8cfa6] bg-[#f4efdc] text-[#4c3d0c]">
            <Cross className="size-[9px]" />
          </button>
        </div>
      </div>
      <div className="mt-1.5 mr-0.5 flex shrink-0 justify-end gap-[5px]">
        <PushButton>Закрыть</PushButton>
        <PushButton>Справка</PushButton>
      </div>
    </WindowFrame>
  );
}

function Workspace() {
  return (
    <main className="relative min-w-0 flex-1 overflow-hidden border-t-2 border-l-2 border-[#77776f] bg-[#d9d3bd]">
      <div className="absolute top-[26px] left-[167px] h-[479px] w-[522px]">
        <BackWindow />
      </div>
      <div className="absolute top-[7px] left-[49px] h-[518px] w-[522px]">
        <PlanWindow />
      </div>
      <p className="absolute top-[574px] left-12 font-['Noto_Sans',sans-serif] text-[24px] leading-[33px] whitespace-nowrap text-[#e8120f]">
        Создайте план видов расчета «Начисления»,
        <br />
        в нем будут содержаться виды расчетов, имеющие
        <br />
        протяженность во времени.
      </p>
      <svg viewBox="0 0 300 660" className="pointer-events-none absolute top-0 left-0 h-[660px] w-[300px]" aria-hidden="true">
        <circle cx="244" cy="51" r="14" fill="none" stroke="#dc1410" strokeWidth="3" />
        <path d="M154 646 L239 80" stroke="#e3120f" strokeWidth="3" />
        <path d="M242 61 L231 82 L250 84 Z" fill="#f20d0a" />
      </svg>
    </main>
  );
}

function EditorStrip() {
  const row = "flex h-[18px] shrink-0 items-center gap-px text-[10px] text-[#9a9a9a]";
  const chevron = (
    <svg viewBox="0 0 5 8" className="h-2 w-[5px] shrink-0" aria-hidden="true">
      <path d="M0.500 0.500 L4 4 L0.500 7.500" fill="none" stroke="currentColor" />
    </svg>
  );
  return (
    <div className="mb-[72px] flex w-[13px] shrink-0 flex-col bg-[#1d1d1e]">
      <div className="h-10 shrink-0 bg-[#252526] pt-[3px]">
        <div className={row}>{chevron}c</div>
        <div className={row}>
          <svg viewBox="0 0 8 5" className="h-[5px] w-[5px] shrink-0" aria-hidden="true">
            <path d="M0.500 0.500 L4 4 L7.500 0.500" fill="none" stroke="currentColor" />
          </svg>
          S
        </div>
      </div>
      <div className="flex-[403]" />
      <div className="h-[18px] shrink-0 bg-[#2c2c31]" />
      <div className="flex-[263]" />
      <div className="shrink-0 bg-[#252526]">
        <div className={row}>{chevron}c</div>
        <div className={row}>{chevron}T</div>
        <div className={row}>{chevron}r</div>
        <div className={row}>{chevron}r</div>
      </div>
      <div className="flex h-5 shrink-0 items-center bg-[#0b6cb3] pl-[3px] text-[#d5e6f3]">m</div>
    </div>
  );
}

export default function App() {
  return (
    <div className="flex h-screen overflow-hidden bg-linear-to-b from-[#0a0e1c] to-[#0c1124] font-['Liberation_Sans',Arial,sans-serif] text-[11px] leading-[13px] text-black">
      <EditorStrip />
      <div className="mb-[37px] flex min-w-0 flex-1 flex-col border-b border-l border-[#d9d4b8] bg-[#f4f1dd]">
        <Toolbars />
        <div className="flex min-h-0 flex-1 gap-1">
          <Sidebar />
          <Workspace />
        </div>
        <div className="flex h-6 shrink-0 gap-px border-t border-white pt-px pb-px pl-px text-[#33312a]">
          <button type="button" className="flex h-5 w-[172px] items-center border border-[#9d9d9f] bg-[#aeaeb0] pl-px">
            <Icon name="subsystem" />
            <span className="pl-px">Подсистема Зарплата</span>
          </button>
          <button type="button" className="flex h-5 w-[172px] items-center border border-[#93a9c4] bg-[#adc6e4] whitespace-nowrap">
            <Icon name="calc" />
            <span className="pl-0.5">План видов расчета Начис…</span>
          </button>
        </div>
        <footer className="flex h-5 shrink-0 items-center border-t border-[#dcd6bb] pb-0.5 pl-1 text-[#4c3d0c]">Для получения подсказки нажмите F1</footer>
      </div>
    </div>
  );
}
